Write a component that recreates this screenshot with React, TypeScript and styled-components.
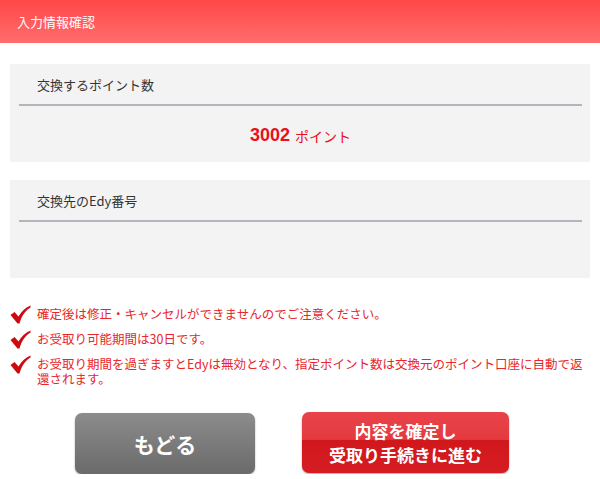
import * as React from 'react'
import styled, { createGlobalStyle } from 'styled-components'

const GlobalStyle = createGlobalStyle`
  body {
    margin: 0;
    background: #fff;
    font-family: 'Noto Sans CJK JP', 'Noto Sans', sans-serif;
  }
`

const Header = styled.header`
  height: 43px;
  box-sizing: border-box;
  padding-left: 17px;
  display: flex;
  align-items: center;
  background-image: linear-gradient(180deg, #ff4747, #ff6d6d);
  color: #fff;
  font-size: 13px;
`

const Main = styled.main`
  padding: 21px 10px 0;
  display: flex;
  flex-direction: column;
  gap: 18px;
`

const Panel = styled.section`
  background: #f3f3f3;
  height: 98px;
  box-sizing: border-box;
  padding: 0 8px 0 9px;
  display: flex;
  flex-direction: column;
`

const PanelLabel = styled.div`
  height: 42px;
  box-sizing: border-box;
  padding: 11px 0 0 18px;
  font-size: 13px;
  color: #333;
  border-bottom: 2px solid #b4b4bc;
`

const PanelBody = styled.div`
  flex: 1;
  display: flex;
  align-items: center;
  justify-content: center;
  color: #e8101c;
  padding-top: 3px;
`

const Amount = styled.span`
  font-family: 'Liberation Sans', Arial, sans-serif;
  font-weight: bold;
  font-size: 18px;
  margin-right: 5px;
`

const Unit = styled.span`
  font-size: 14px;
`

const Notes = styled.ul`
  list-style: none;
  margin: 28px 0 0;
  padding: 0 10px;
  display: flex;
  flex-direction: column;
  gap: 7px;
`

const Note = styled.li`
  display: flex;
  align-items: flex-start;
  gap: 6px;
  color: #e8262b;
  font-size: 12.5px;
  line-height: 15px;
`

const Check = styled.svg`
  flex: none;
  width: 21px;
  height: 19px;
  margin-top: -1px;
`

const Buttons = styled.div`
  display: flex;
  gap: 47px;
  margin-top: 27px;
  padding-left: 75px;
`

const Button = styled.button<{ $primary?: boolean }>`
  width: ${p => (p.$primary ? '207px' : '180px')};
  height: 61px;
  border: none;
  border-radius: 7px;
  color: #fff;
  font-family: 'Noto Sans CJK JP', sans-serif;
  font-weight: bold;
  font-size: ${p => (p.$primary ? '17px' : '21px')};
  line-height: 24px;
  box-shadow: 0 1px 2px rgba(0, 0, 0, 0.35);
  background-image: ${p =>
    p.$primary
      ? 'linear-gradient(180deg, #e9434a 0%, #e33a3f 45%, #d0181c 46%, #d41c22 100%)'
      : 'linear-gradient(180deg, #8c8c8c, #6a6a6a)'};
  margin-top: ${p => (p.$primary ? '-1px' : '0')};
  padding: 0;
`

const CheckIcon = () => (
  <Check viewBox="0 0 21 19">
    <path d="M0.5 10 L4.5 7 L8.5 11.5 C11.5 6.5 15 3 20.5 0.5 L20.5 2.5 C15.5 5.5 12 10 9.5 18.5 L7.5 18.5 Z" fill="#cc0a0f" />
  </Check>
)

const notes = [
  '確定後は修正・キャンセルができませんのでご注意ください。',
  'お受取り可能期間は30日です。',
  'お受取り期間を過ぎますとEdyは無効となり、指定ポイント数は交換元のポイント口座に自動で返還されます。',
]

export default function App() {
  return (
    <>
      <GlobalStyle />
      <Header>入力情報確認</Header>
      <Main>
        <Panel>
          <PanelLabel>交換するポイント数</PanelLabel>
          <PanelBody>
            <Amount>3002</Amount>
            <Unit>ポイント</Unit>
          </PanelBody>
        </Panel>
        <Panel>
          <PanelLabel>交換先のEdy番号</PanelLabel>
          <PanelBody />
        </Panel>
      </Main>
      <Notes>
        {notes.map(n => (
          <Note key={n}>
            <CheckIcon />
            <span>{n}</span>
          </Note>
        ))}
      </Notes>
      <Buttons>
        <Button>もどる</Button>
        <Button $primary>
          内容を確定し
          <br />
          受取り手続きに進む
        </Button>
      </Buttons>
    </>
  )
}
